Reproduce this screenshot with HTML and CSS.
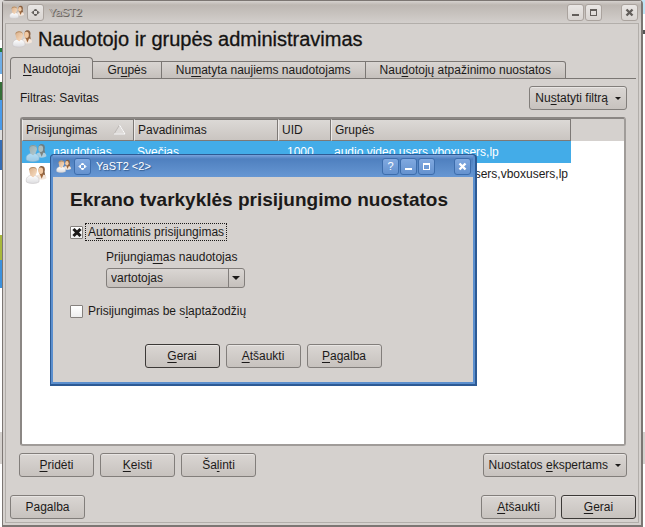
FILE: index.html
```html
<!DOCTYPE html>
<html lang="lt">
<head>
<meta charset="utf-8">
<meta name="viewport" content="width=device-width, initial-scale=1">
<title>YaST2</title>
<link rel="stylesheet" href="styles.css">
</head>
<body>
<svg class="defs" aria-hidden="true">
  <defs>
    <linearGradient id="shirt" x1="0" y1="0" x2="0" y2="1"><stop offset="0" stop-color="#fff"/><stop offset="1" stop-color="#dcdcdf"/></linearGradient>
    <linearGradient id="skin" x1="0" y1="0" x2="1" y2="1"><stop offset="0" stop-color="#d9ad84"/><stop offset="1" stop-color="#f8dfc7"/></linearGradient>
    <symbol id="users" viewBox="0 0 22 20">
      <path d="M14 7C13 3 15 1 17 1c3 0 4 3 3 6l1 6h-5z" fill="#8a6040"/>
      <ellipse cx="16" cy="6" rx="2.500" ry="3.500" fill="#f2c9a2"/>
      <path d="M11 14c0-3 2-4 4-4h3c3 0 4 2 4 4-2 2-8 2-11 0z" fill="#f4e6da"/>
      <path d="M15 9.500l2 5 2-5z" fill="#a0683c"/>
      <path d="M1 18c-1-4 1-6 4-7h5c3 1 5 3 4 7-3 2-10 2-13 0z" fill="url(#shirt)" stroke="#c5c1c2" stroke-width=".6"/>
      <path d="M5 11l3 2 2-2V8H5z" fill="#f0cba9"/>
      <path d="M4 6c0-3 2-4 4-4s4 1 4 4-2 6-4 6-4-3-4-6z" fill="url(#skin)"/>
      <path d="M4 6C3 3 6 2 8 2s4 1 4 4l-1-2C9 3 7 3 5 4z" fill="#b58e68"/>
    </symbol>
    <symbol id="pin" viewBox="0 0 15 15"><path d="M7.500 4l1.500 1.500H6zM11 7.500L9.500 9V6zM7.500 11L6 9.500h3zM4 7.500L5.500 6v3z" fill="currentColor" stroke="currentColor"/></symbol>
    <symbol id="minimize" viewBox="0 0 15 15"><path d="M4 9h7v2H4z" fill="currentColor"/></symbol>
    <symbol id="maximize" viewBox="0 0 15 15"><path d="M4 4h7v7H4zM5 6v4h5V6z" fill="currentColor" fill-rule="evenodd"/></symbol>
    <symbol id="close" viewBox="0 0 15 15"><path d="M4.500 4.500l6 6M10.500 4.500l-6 6" fill="none" stroke="currentColor" stroke-width="2.400"/></symbol>
  </defs>
</svg>

<main class="window">
  <header class="titlebar">
    <svg class="app-icon"><use href="#users"/></svg>
    <button class="win-btn" aria-label="Meniu"><svg><use href="#pin"/></svg></button>
    <span class="title">YaST2</span>
    <button class="win-btn" aria-label="Sumažinti"><svg><use href="#minimize"/></svg></button>
    <button class="win-btn" aria-label="Padidinti"><svg><use href="#maximize"/></svg></button>
    <button class="win-btn win-close" aria-label="Užverti"><svg><use href="#close"/></svg></button>
  </header>
  <div class="client">
    <h1 class="heading"><svg class="heading-icon"><use href="#users"/></svg>Naudotojo ir grupės administravimas</h1>
    <nav class="tabs" role="tablist">
      <button class="tab active" role="tab" aria-selected="true"><u>N</u>audotojai</button>
      <button class="tab" role="tab">Gr<u>u</u>pės</button>
      <button class="tab" role="tab">Nu<u>m</u>atyta naujiems naudotojams</button>
      <button class="tab" role="tab">Nau<u>d</u>otojų atpažinimo nuostatos</button>
    </nav>
    <section class="panel">
      <div class="filter">
        <span>Filtras: Savitas</span>
        <button class="btn menu">Nu<u>s</u>tatyti filtrą</button>
      </div>
      <div class="list">
        <table>
          <colgroup><col class="col-login"><col class="col-name"><col class="col-uid"><col class="col-groups"></colgroup>
          <thead>
            <tr><th>Prisijungimas <svg class="sort" viewBox="0 0 13 11"><path d="M1 10L6.500 1 12 10z" fill="#dedbd9" stroke="#bcb8b5"/><path d="M6.500 1L12 10H1" fill="none" stroke="#fff"/></svg></th><th>Pavadinimas</th><th>UID</th><th>Grupės</th></tr>
          </thead>
          <tbody>
            <tr class="selected"><td class="login"><svg><use href="#users"/></svg>naudotojas</td><td>Svečias</td><td class="uid">1000</td><td>audio,video,users,vboxusers,lp</td></tr>
            <tr><td class="login"><svg><use href="#users"/></svg>vartotojas</td><td></td><td class="uid">1001</td><td class="long">users,vboxusers,lp</td></tr>
          </tbody>
        </table>
      </div>
      <div class="actions">
        <button class="btn"><u>P</u>ridėti</button>
        <button class="btn"><u>K</u>eisti</button>
        <button class="btn">Ša<u>l</u>inti</button>
        <button class="btn menu push">Nuostatos <u>e</u>kspertams</button>
      </div>
    </section>
    <footer class="footer">
      <button class="btn">Pagalba</button>
      <button class="btn push"><u>A</u>tšaukti</button>
      <button class="btn default"><u>G</u>erai</button>
    </footer>
  </div>
</main>

<div class="dialog" role="dialog" aria-labelledby="dialog-heading">
  <header class="titlebar">
    <svg class="app-icon"><use href="#users"/></svg>
    <button class="win-btn" aria-label="Meniu"><svg><use href="#pin"/></svg></button>
    <span class="title">YaST2 &lt;2&gt;</span>
    <button class="win-btn" aria-label="Žinynas">?</button>
    <button class="win-btn" aria-label="Sumažinti"><svg><use href="#minimize"/></svg></button>
    <button class="win-btn" aria-label="Padidinti"><svg><use href="#maximize"/></svg></button>
    <button class="win-btn win-close" aria-label="Užverti"><svg><use href="#close"/></svg></button>
  </header>
  <form class="dialog-body">
    <h2 id="dialog-heading">Ekrano tvarkyklės prisijungimo nuostatos</h2>
    <div class="check"><input type="checkbox" id="auto" checked><label for="auto" class="focused">A<u>u</u>tomatinis prisijungimas</label></div>
    <div class="field">
      <label for="user">Prijungia<u>m</u>as naudotojas</label>
      <span class="combo"><select id="user"><option>vartotojas</option><option>naudotojas</option></select></span>
    </div>
    <div class="check"><input type="checkbox" id="nopass"><label for="nopass">Prisijungimas be s<u>l</u>aptažodžių</label></div>
    <div class="dialog-buttons">
      <button type="button" class="btn default"><u>G</u>erai</button>
      <button type="button" class="btn"><u>A</u>tšaukti</button>
      <button type="button" class="btn"><u>P</u>agalba</button>
    </div>
  </form>
</div>
</body>
</html>
```
FILE: styles.css
```css
* { box-sizing: border-box; }
body {
  margin: 0;
  padding: 0 2px 0;
  min-height: 100vh;
  display: flex;
  position: relative;
  color: #1c1a19;
  font: 12px/16px "Liberation Sans", Arial, sans-serif;
  background:
    linear-gradient(#bfe4f5 0 14px, #fff 14px 30px, #555 30px 34px, #fff 34px 432px, #d5d1ce 432px 464px, #fff 464px) right / 3px 100% no-repeat,
    linear-gradient(#dedbd9 0 40px, #fff 40px 48px, #24793b 48px 52px, #6faee6 52px 74px, #fff 74px 82px, #356f38 82px 100px, #4a9bea 100px 130px, #ddd 130px 140px, #356db5 140px 170px, #fff 170px 235px, #a8b83c 235px 260px, #3b91dd 260px 288px, #fff 288px 432px, #d5d1ce 432px 464px, #fff 464px);
}
button, select, input { font: inherit; color: inherit; margin: 0; }
button { padding: 0; }
u { text-decoration: underline; text-underline-offset: 2px; text-decoration-thickness: 1px; }
.defs { position: absolute; width: 0; height: 0; }

.window {
  flex: 1;
  display: flex;
  flex-direction: column;
  border: 1px solid #7c7673;
  border-right-width: 2px;
  border-bottom-width: 2px;
  border-radius: 4px 4px 0 0;
  background: #d5d1ce;
}
.titlebar {
  display: flex;
  align-items: center;
  gap: 1px;
  height: 22px;
  padding: 0 3px 0 6px;
  background: linear-gradient(#d6d2cf, #bdb7b2 4px, #d3cfcc);
}
.app-icon { width: 15px; height: 14px; margin-right: 2px; }
.title { flex: 1; margin-left: 4px; font-size: 11px; color: #c1bbb6; text-shadow: 1px 1px 0 #69645f, 0 1px 0 #807b76; }
.win-btn {
  display: grid;
  place-items: center;
  width: 17px;
  height: 17px;
  border: 1px solid #aaa39e;
  border-radius: 3px;
  background: linear-gradient(#e9e6e4, #d8d4d1);
  color: #625e5b;
}
.win-btn svg { width: 15px; height: 15px; }
.win-close { margin-left: 18px; }
.client {
  flex: 1;
  display: flex;
  flex-direction: column;
  margin: 0 2px 2px;
  padding: 0 2px 3px 4px;
  border: 1px solid #b2aeaa;
}
.heading { display: flex; align-items: center; gap: 6px; height: 33px; margin: 0; padding: 0 0 4px 2px; font-size: 20px; font-weight: 400; line-height: 28px; color: #141312; -webkit-text-stroke: 0.3px #141312; }
.heading-icon { width: 20px; height: 19px; }
.tabs { display: flex; align-items: flex-start; height: 22px; box-shadow: inset 0 -1px #7b7774; }
.tab {
  height: 18px;
  margin-top: 4px;
  padding: 0 14px;
  border: 1px solid #7b7774;
  border-left: 0;
  background: linear-gradient(#d9d5d2, #c5c0bc);
  white-space: nowrap;
}
.tab.active { height: 22px; margin-top: 0; padding: 0 12px; border-left: 1px solid #7b7774; border-bottom: 0; border-radius: 4px 4px 0 0; background: #d5d1ce; }
.tab:last-child { border-radius: 0 3px 0 0; }
.panel { flex: 1; display: flex; flex-direction: column; gap: 7px; padding: 7px 9px 0 9px; }
.filter { display: flex; align-items: center; justify-content: space-between; padding-left: 1px; }
.btn {
  display: inline-flex;
  align-items: center;
  justify-content: center;
  min-width: 75px;
  height: 24px;
  padding: 0 5px;
  border: 1px solid #827e7b;
  border-radius: 3px;
  box-shadow: inset 0 1px #e8e5e3;
  background: linear-gradient(#dad6d3, #c7c2be);
  white-space: pre;
}
.btn.default { border-color: #3c3937; }
.btn.menu::after { content: ""; margin-left: 7px; border: 3px solid transparent; border-top-color: #1c1a19; border-bottom: 0; }
.push { margin-left: auto; }
.list {
  flex: 1;
  margin: 0 1px;
  border: 2px solid #8b8784;
  border-right-color: #a09c99;
  border-bottom-color: #a09c99;
  border-radius: 3px;
  background: linear-gradient(#d5d1ce 22px, #fff 22px);
}
table { width: 549px; table-layout: fixed; border-collapse: separate; border-spacing: 0; }
.col-login { width: 112px; }
.col-name { width: 144px; }
.col-uid { width: 53px; }
.col-groups { width: 240px; }
th, td { height: 22px; padding: 0 3px; text-align: left; font-weight: 400; white-space: nowrap; }
th { border: 1px solid #7d7976; border-left-color: #eeebe9; background: linear-gradient(#dcd9d6, #cac5c1); }
.sort { float: right; width: 13px; height: 11px; margin: 2px 4px 0 0; }
.selected { background: #43ace8; color: #fff; }
.login svg { width: 22px; height: 19px; margin-right: 6px; vertical-align: middle; }
.selected svg { opacity: 0.6; }
.uid { padding-left: 9px; }
.long { text-align: right; }
.actions, .footer, .dialog-buttons { display: flex; gap: 5px; }
.actions, .dialog-buttons { gap: 6px; }
.footer { margin-top: 18px; }

.dialog {
  position: absolute;
  left: 50px;
  top: 154px;
  width: 427px;
  border: 1px solid #2d5a94;
  border-width: 1px 2px 2px 1px;
  border-radius: 4px 4px 0 0;
  background: #5b8fce;
  padding: 0 2px 2px;
}
.dialog .titlebar { padding: 0 2px 0 3px; background: linear-gradient(#79a3dc, #4f80bf 4px, #6797d3); }
.dialog .title { color: #fff; text-shadow: 1px 1px 1px #31598c; }
.dialog .win-btn { border-color: #3d6dac; background: linear-gradient(#80a9e0, #6592cf); color: #fff; font-size: 11px; line-height: 14px; }
.dialog-body { padding: 11px 17px 14px; background: #d5d1ce; }
.dialog h2 { margin: 0 0 11px; font-size: 19px; line-height: 24px; white-space: nowrap; }
.check { display: flex; align-items: center; gap: 2px; height: 18px; }
.check label { padding: 0 2px; border: 1px solid transparent; }
.check .focused { border: 1px dotted #1c1a19; }
.check input { appearance: none; display: grid; place-items: center; width: 13px; height: 13px; border: 1px solid #85817e; border-radius: 1px; background: linear-gradient(#fff, #eee); }
.check input:checked::before, .check input:checked::after { content: ""; grid-area: 1 / 1; width: 10px; height: 3px; background: #1c1a19; transform: rotate(45deg); }
.check input:checked::after { transform: rotate(-45deg); }
.field { display: flex; flex-direction: column; align-items: flex-start; gap: 3px; margin: 8px 0 14px 36px; }
.combo { position: relative; display: flex; }
.combo select { appearance: none; width: 139px; height: 20px; padding: 0 4px; border: 1px solid #827e7b; border-radius: 3px; background: linear-gradient(#dad6d3, #c5c0bc); }
.combo::before { content: ""; position: absolute; right: 16px; top: 1px; bottom: 1px; border-left: 1px solid #827e7b; pointer-events: none; }
.combo::after { content: ""; position: absolute; right: 5px; top: 8px; border: 4px solid transparent; border-top-color: #1c1a19; border-bottom: 0; pointer-events: none; }
.dialog-buttons { justify-content: center; margin-top: 24px; }
```
